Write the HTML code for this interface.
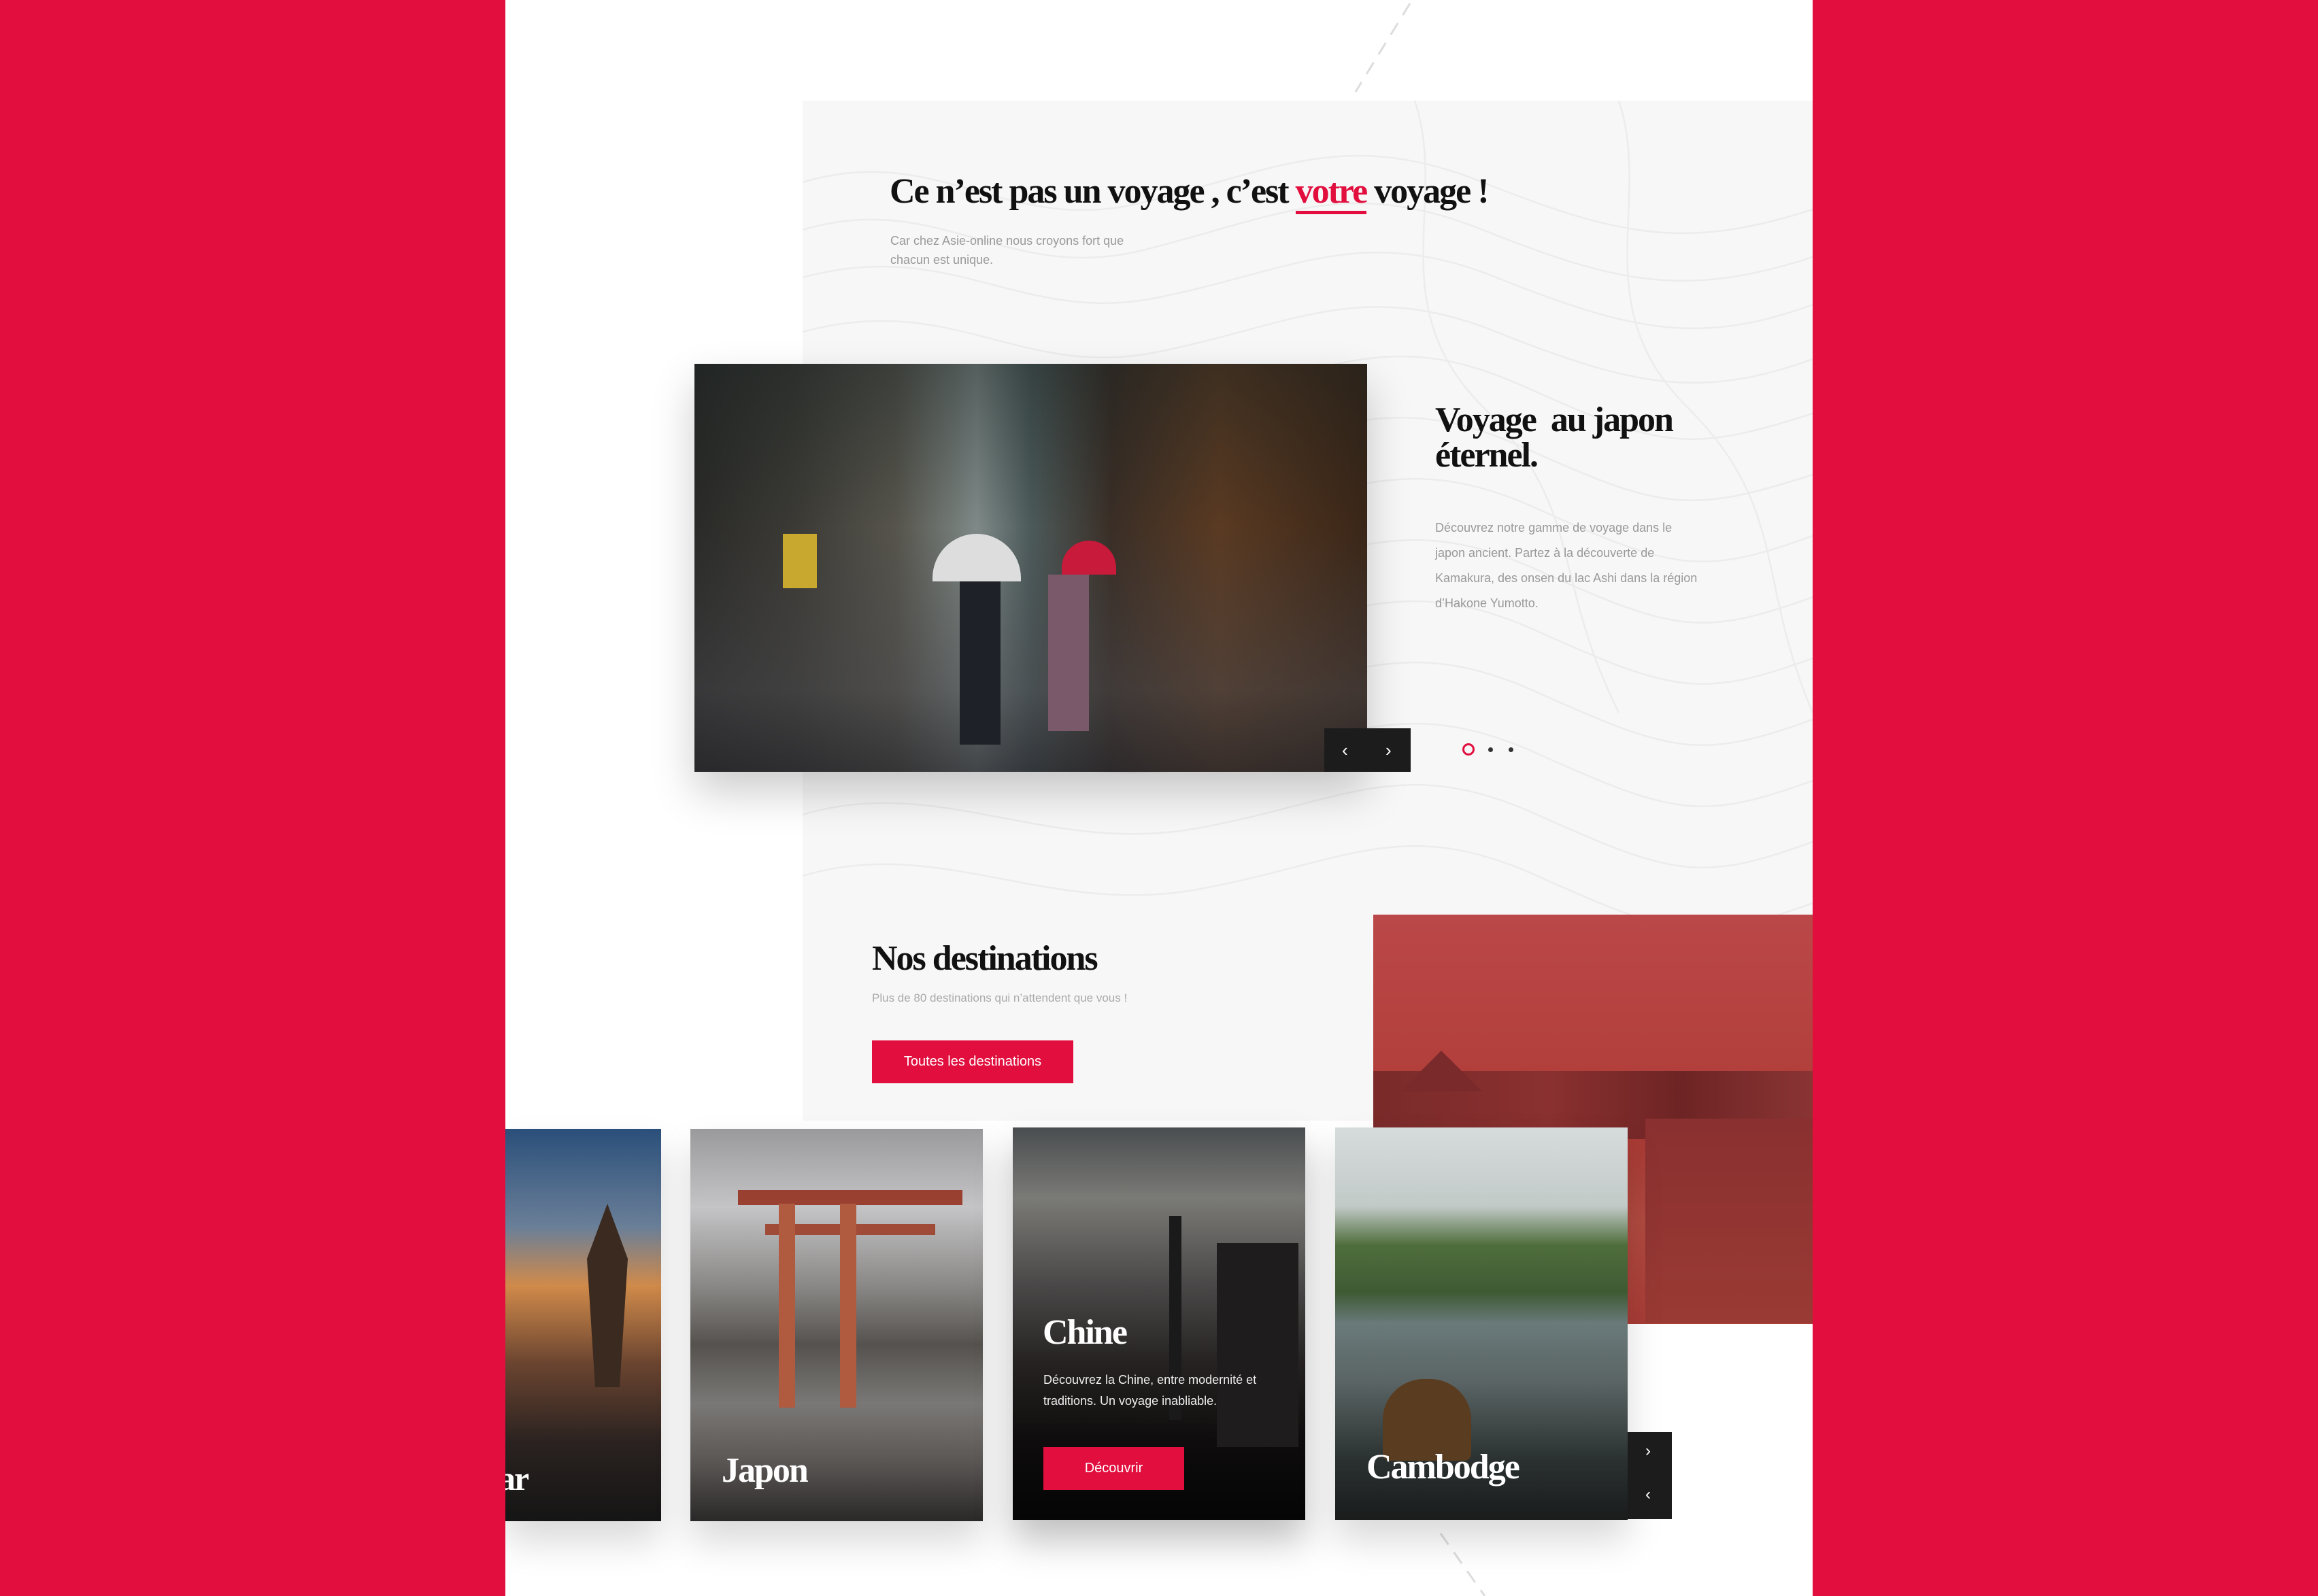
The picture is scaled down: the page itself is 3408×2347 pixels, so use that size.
<!DOCTYPE html>
<html><head><meta charset="utf-8">
<style>
*{margin:0;padding:0;box-sizing:border-box}
body{width:3408px;height:2347px;background:#e10e3e;position:relative;overflow:hidden;font-family:"Liberation Sans",sans-serif}
.abs{position:absolute}
.serif{font-family:"Liberation Serif",serif;font-weight:bold;letter-spacing:-2px}
.sans{font-family:"Liberation Sans",sans-serif}
</style></head><body>
<div class="abs" style="left:743px;top:0;width:1922px;height:2347px;background:#fff;overflow:hidden">
  <div class="abs" style="left:437px;top:148px;width:1485px;height:1500px;background:#f7f7f7;overflow:hidden">
    <svg width="1485" height="1500" style="position:absolute;left:0;top:0" fill="none" stroke="#ececec" stroke-width="2.5">
      <path d="M0 120 C200 60 300 200 500 150 S800 40 1000 120 S1300 220 1485 160"/>
      <path d="M0 190 C200 130 300 270 500 220 S800 110 1000 190 S1300 290 1485 230"/>
      <path d="M0 260 C220 200 320 330 520 290 S820 180 1020 260 S1320 360 1485 300"/>
      <path d="M0 340 C220 280 320 410 520 370 S820 260 1020 340 S1320 440 1485 380"/>
      <path d="M0 420 C180 360 340 480 560 440 S860 330 1060 420 S1300 520 1485 460"/>
      <path d="M0 510 C180 450 340 570 560 530 S860 420 1060 510 S1300 610 1485 550"/>
      <path d="M0 600 C200 540 360 660 580 620 S880 510 1080 600 S1320 700 1485 640"/>
      <path d="M0 690 C200 630 360 750 580 710 S880 600 1080 690 S1320 790 1485 730"/>
      <path d="M0 780 C200 720 360 840 580 800 S880 690 1080 780 S1320 880 1485 820"/>
      <path d="M0 870 C200 810 360 930 580 890 S880 780 1080 870 S1320 970 1485 910"/>
      <path d="M0 960 C200 900 360 1020 580 980 S880 870 1080 960 S1320 1060 1485 1000"/>
      <path d="M0 1050 C200 990 360 1110 580 1070 S880 960 1080 1050 S1320 1150 1485 1090"/>
      <path d="M0 1140 C200 1080 360 1200 580 1160 S880 1050 1080 1140 S1320 1240 1485 1180"/>
      <path d="M900 0 C950 150 850 300 1000 450 S1100 700 1200 900"/>
      <path d="M1200 0 C1250 150 1150 300 1300 450 S1400 700 1485 900"/>
    </svg>
  </div>
  <svg class="abs" style="left:1220px;top:0" width="120" height="140"><line x1="110" y1="5" x2="30" y2="135" stroke="#ddd" stroke-width="3" stroke-dasharray="20 14"/></svg>
  <svg class="abs" style="left:1370px;top:2250px" width="120" height="97"><line x1="5" y1="5" x2="70" y2="97" stroke="#ddd" stroke-width="3" stroke-dasharray="20 14"/></svg>

  <div class="abs serif" style="left:565px;top:252px;font-size:52px;color:#111;white-space:nowrap">Ce n’est pas un voyage , c’est <span style="color:#e10e3e;border-bottom:5px solid #e10e3e;line-height:1">votre</span> voyage !</div>
  <div class="abs sans" style="left:566px;top:340px;font-size:18px;line-height:28px;color:#999">Car chez Asie-online nous croyons fort que<br>chacun est unique.</div>

  <div class="abs" style="left:278px;top:535px;width:989px;height:600px;box-shadow:0 30px 60px rgba(0,0,0,.2);overflow:hidden;background:linear-gradient(90deg,#2a2a28 0%,#3b3a35 15%,#56544c 30%,#7f8a88 42%,#4c5a5a 50%,#3a2e26 62%,#5a3a22 78%,#3a2618 100%)">
    <div class="abs" style="left:0;top:0;width:989px;height:600px;background:linear-gradient(180deg,rgba(20,30,30,.4) 0%,rgba(0,0,0,0) 40%,rgba(70,70,75,.5) 80%,rgba(40,40,45,.7) 100%)"></div>
    <div class="abs" style="left:350px;top:250px;width:130px;height:70px;border-radius:65px 65px 0 0;background:#ddd"></div>
    <div class="abs" style="left:540px;top:260px;width:80px;height:50px;border-radius:40px 40px 0 0;background:#c81a3a"></div>
    <div class="abs" style="left:390px;top:320px;width:60px;height:240px;background:#1e2228"></div>
    <div class="abs" style="left:520px;top:310px;width:60px;height:230px;background:#7a5a6a"></div>
    <div class="abs" style="left:130px;top:250px;width:50px;height:80px;background:#c9a830"></div>
  </div>
  <div class="abs" style="left:1204px;top:1071px;width:127px;height:64px;background:#1c1c1c;color:#fff;font-size:26px;line-height:64px">
    <span class="abs" style="left:26px">‹</span><span class="abs" style="left:90px">›</span></div>

  <div class="abs serif" style="left:1367px;top:592px;font-size:52px;line-height:52px;color:#111">Voyage&nbsp; au japon<br>éternel.</div>
  <div class="abs sans" style="left:1367px;top:758px;font-size:18px;line-height:37px;color:#999">Découvrez notre gamme de voyage dans le<br>japon ancient. Partez à la découverte de<br>Kamakura, des onsen du lac Ashi dans la région<br>d’Hakone Yumotto.</div>
  <div class="abs" style="left:1407px;top:1093px;width:18px;height:18px;border:3px solid #e10e3e;border-radius:50%"></div>
  <div class="abs" style="left:1445px;top:1099px;width:7px;height:7px;background:#333;border-radius:50%"></div>
  <div class="abs" style="left:1475px;top:1099px;width:7px;height:7px;background:#333;border-radius:50%"></div>

  <div class="abs serif" style="left:539px;top:1380px;font-size:52px;color:#111">Nos destinations</div>
  <div class="abs sans" style="left:539px;top:1458px;font-size:17px;color:#aaa">Plus de 80 destinations qui n’attendent que vous !</div>
  <div class="abs sans" style="left:539px;top:1530px;width:296px;height:63px;background:#e10e3e;color:#fff;font-size:20px;line-height:63px;text-align:center">Toutes les destinations</div>

  <div class="abs" style="left:1276px;top:1345px;width:646px;height:602px;overflow:hidden;background:linear-gradient(180deg,#bb4848 0%,#b3403c 35%,#a83a34 55%,#b04a40 75%,#a83c36 100%)">
    <div class="abs" style="left:0;top:230px;width:646px;height:100px;background:linear-gradient(90deg,#7a2a2a,#8a3030 40%,#6e2424 70%,#8a3434)"></div>
    <div class="abs" style="left:40px;top:200px;width:120px;height:60px;background:#7a2a2a;clip-path:polygon(0 100%,50% 0,100% 100%)"></div>
    <div class="abs" style="left:400px;top:300px;width:246px;height:300px;background:linear-gradient(180deg,#8a3030,#9a3a34)"></div>
  </div>

  <div class="abs" style="left:0;top:1660px;width:229px;height:577px;box-shadow:0 30px 50px rgba(0,0,0,.15);background:linear-gradient(180deg,#2a4f7a 0%,#6a7f98 25%,#d08a4a 40%,#6a4430 60%,#2a2220 80%,#151515 100%)">
    <div class="abs" style="left:120px;top:110px;width:60px;height:270px;background:#3a2a20;clip-path:polygon(50% 0,100% 30%,80% 100%,20% 100%,0 30%)"></div>
    <div class="abs serif" style="left:-10px;top:485px;font-size:50px;color:#fff">ar</div>
  </div>
  <div class="abs" style="left:272px;top:1660px;width:430px;height:577px;overflow:hidden;box-shadow:0 30px 50px rgba(0,0,0,.15);background:linear-gradient(180deg,#9a9a9c 0%,#c4c4c6 20%,#8a8886 40%,#55524e 55%,#7a7876 70%,#5a5654 85%,#2a2828 100%)">
    <div class="abs" style="left:70px;top:90px;width:330px;height:22px;background:#9a4030"></div>
    <div class="abs" style="left:110px;top:140px;width:250px;height:16px;background:#a04a38"></div>
    <div class="abs" style="left:130px;top:110px;width:24px;height:300px;background:#b05a40"></div>
    <div class="abs" style="left:220px;top:110px;width:24px;height:300px;background:#b05a40"></div>
    <div class="abs serif" style="left:46px;top:473px;font-size:52px;color:#fff">Japon</div>
  </div>
  <div class="abs" style="left:746px;top:1658px;width:430px;height:577px;overflow:hidden;box-shadow:0 30px 50px rgba(0,0,0,.25);background:linear-gradient(180deg,#4a4d50 0%,#7a7a76 18%,#4a4848 40%,#262222 60%,#0e0c0c 80%,#050505 100%)">
    <div class="abs" style="left:230px;top:130px;width:18px;height:300px;background:#1a1a1a"></div>
    <div class="abs" style="left:300px;top:170px;width:120px;height:300px;background:#1e1c1c"></div>
    <div class="abs serif" style="left:44px;top:272px;font-size:52px;color:#fff">Chine</div>
    <div class="abs sans" style="left:45px;top:356px;font-size:18px;line-height:31px;color:#eee">Découvrez la Chine, entre modernité et<br>traditions. Un voyage inabliable.</div>
    <div class="abs sans" style="left:45px;top:470px;width:207px;height:63px;background:#e10e3e;color:#fff;font-size:20px;line-height:63px;text-align:center">Découvrir</div>
  </div>
  <div class="abs" style="left:1220px;top:1658px;width:430px;height:577px;overflow:hidden;box-shadow:0 30px 50px rgba(0,0,0,.15);background:linear-gradient(180deg,#d6dcdc 0%,#c2cac8 20%,#4f6e3c 30%,#3e5a34 42%,#6a7a7a 50%,#5a6464 65%,#2a3030 85%,#1a1c1c 100%)">
    <div class="abs" style="left:70px;top:370px;width:130px;height:120px;background:#5a3c20;border-radius:60px 60px 10px 10px"></div>
    <div class="abs serif" style="left:46px;top:470px;font-size:52px;color:#fff">Cambodge</div>
  </div>
  <div class="abs" style="left:1650px;top:2106px;width:65px;height:128px;background:#1c1c1c;color:#fff;font-size:24px">
    <span class="abs" style="left:26px;top:14px">›</span><span class="abs" style="left:26px;top:78px">‹</span></div>
</div>
</body></html>
